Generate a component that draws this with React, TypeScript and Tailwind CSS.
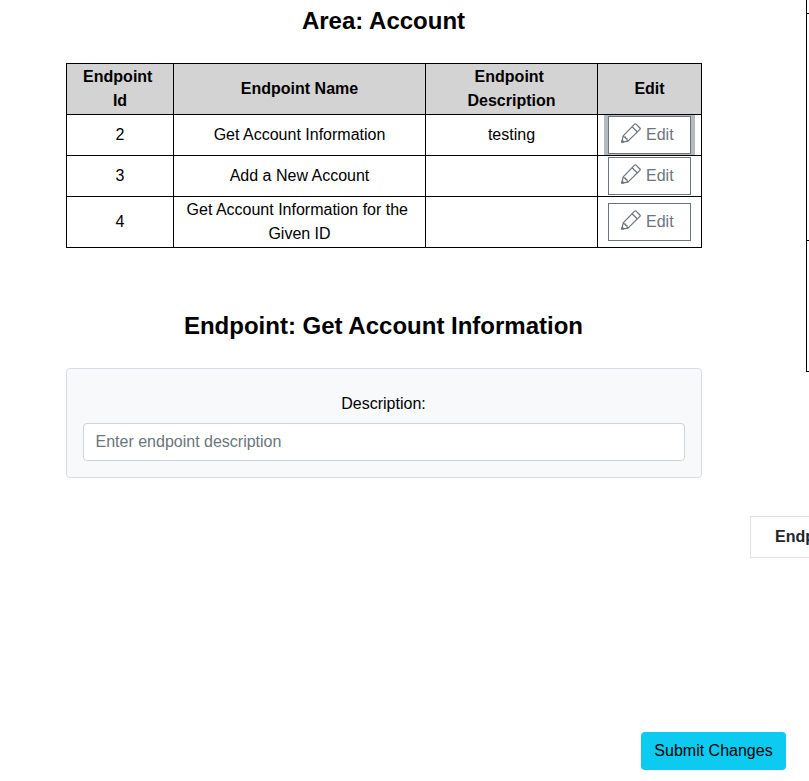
const rows = [
  { id: 2, name: "Get Account Information", description: "testing", height: "h-[41px]", focused: true },
  { id: 3, name: "Add a New Account", description: "", height: "h-[41px]", focused: false },
  { id: 4, name: "Get Account Information for the Given ID", description: "", height: "h-[51px]", focused: false },
];

const columns = "grid grid-cols-[107px_252px_172px_104px]";
const cell = "flex items-center justify-center overflow-hidden border-r border-b border-black px-2 text-center";

function PencilIcon() {
  return (
    <svg
      viewBox="0 0 20 20"
      fill="none"
      stroke="currentColor"
      strokeWidth="1.25"
      strokeLinejoin="round"
      className="-mt-[5px] h-5 w-5 shrink-0"
    >
      <path d="M13.6 1.1Q14.3.4 15 1.1L18.9 5Q19.6 5.7 18.9 6.4L7 18.1.8 19.2 2.2 12.9Z" />
      <path d="M11.1 3.7 16.4 9M2.2 12.9 3.4 14.1 4.6 14.2 4.7 15.4 5.9 15.5 6 16.9 7 18.1" />
      <path d="M.8 19.2 1.2 17.3 2.7 18.8Z" fill="currentColor" />
    </svg>
  );
}

function EditButton({ focused }: { focused: boolean }) {
  return (
    <button
      className={
        "flex h-[38px] w-[83px] shrink-0 items-center border border-[#6c757d] bg-white pl-3 text-[#6c757d] " +
        (focused ? "shadow-[0_0_0_4px_#b5babe]" : "")
      }
    >
      <PencilIcon />
      <span className="ml-[5px]">Edit</span>
    </button>
  );
}

function EndpointTable() {
  return (
    <div className="mt-[27px] w-[636px] border-t border-l border-black">
      <div className={columns + " h-[51px] bg-[#d3d3d3] font-bold"}>
        <div className={cell}>Endpoint&nbsp;<br />Id</div>
        <div className={cell}>Endpoint Name</div>
        <div className={cell}>Endpoint&nbsp;<br />Description</div>
        <div className={cell}>Edit</div>
      </div>
      {rows.map((row) => (
        <div key={row.id} className={columns + " " + row.height}>
          <div className={cell}>{row.id}</div>
          <div className={cell}>
            {row.id === 4 ? (
              <span>Get Account Information for the&nbsp;<br />Given ID</span>
            ) : (
              row.name
            )}
          </div>
          <div className={cell}>{row.description}</div>
          <div className={cell}>
            <EditButton focused={row.focused} />
          </div>
        </div>
      ))}
    </div>
  );
}

export default function App() {
  return (
    <div className="h-[781px] w-[809px] overflow-hidden bg-white font-['Liberation_Sans',Arial,sans-serif] text-base leading-6 text-black">
      <div className="flex h-[558px]">
        <main className="ml-[66px] w-[635px] shrink-0 pt-[6px]">
          <h2 className="h-[30px] text-center text-2xl leading-[30px] font-bold">Area: Account</h2>
          <EndpointTable />
          <h2 className="mt-[63px] text-center text-2xl leading-[30px] font-bold">
            Endpoint: Get Account Information
          </h2>
          <section className="mt-[27px] h-[110px] w-[636px] rounded border border-[#d9dbde] bg-[#f8f9fb] px-4 pt-[23px]">
            <label htmlFor="description" className="block pr-px text-center">Description:</label>
            <input
              id="description"
              placeholder="Enter endpoint description"
              className="mt-[7px] block h-[38px] w-full rounded border border-[#ced4da] bg-white px-[11.5px] placeholder:text-[#6c757d]"
            />
          </section>
        </main>
        <aside className="ml-[49px] w-[59px] shrink-0 overflow-hidden">
          <div className="ml-14 border-l border-black">
            <div className="h-[14px] border-b border-black" />
            <div className="h-[227px] border-b border-black" />
            <div className="h-[131px] border-b border-black" />
          </div>
          <div className="mt-36 h-[42px] w-32 border border-[#dee2e6] py-2 pl-6 font-bold text-[#212529]">
            Endpoint
          </div>
        </aside>
      </div>
      <div className="mt-[174px] flex justify-end pr-[23px]">
        <button className="h-[38px] w-[145px] rounded bg-[#0dcaf0]">Submit Changes</button>
      </div>
    </div>
  );
}
